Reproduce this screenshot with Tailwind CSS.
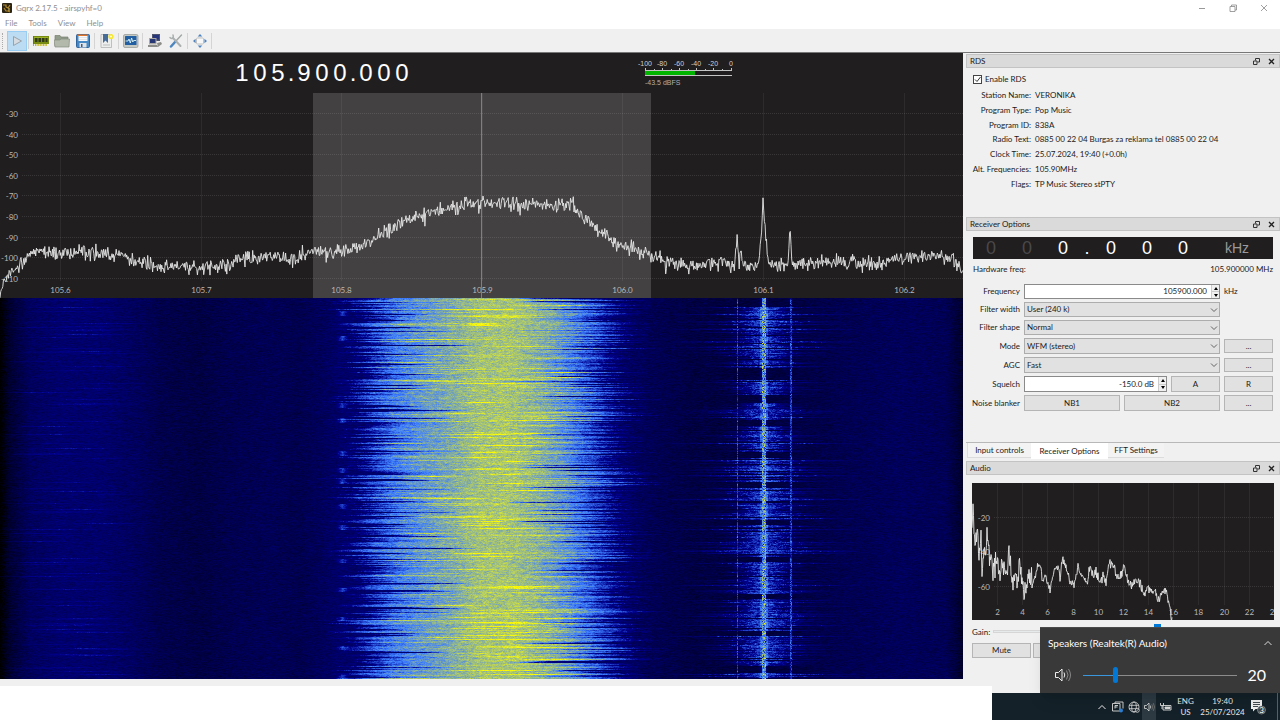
<!DOCTYPE html>
<html lang="en">
<head>
    <meta charset="UTF-8">
    <meta name="viewport" content="width=device-width, initial-scale=1.0">
    <title>Gqrx 2.17.5 - airspyhf=0</title>
    <script src="https://cdn.jsdelivr.net/npm/@tailwindcss/browser@4"></script>
</head>
<body class="relative min-h-screen flex flex-col bg-[#f0f0f0] font-['Lato','Noto_Sans',sans-serif] text-[8px] leading-[14px] text-[#1a1a1a] overflow-x-hidden">

    <!-- title bar -->
    <header class="bg-white text-[#8f8f8f]">
        <div class="flex items-center h-4 pl-0.5 pr-3">
            <svg class="w-[10px] h-[10px] mr-1" viewBox="0 0 10 10"><rect width="10" height="10" rx="1" fill="#2c2412"/><path d="M1 2h3v2l2 1 2-3M2 5l2 3h2l2 1" stroke="#b08a2c" stroke-width="1.2" fill="none"/><path d="M7 5v3" stroke="#e8c860"/></svg>
            <h1 class="flex-1">Gqrx 2.17.5 - airspyhf=0</h1>
            <div class="flex gap-[23px]">
                <button aria-label="Minimize"><svg class="w-2 h-2" viewBox="0 0 8 8"><path d="M1 4.500h6" stroke="#999"/></svg></button>
                <button aria-label="Restore"><svg class="w-2 h-2" viewBox="0 0 8 8" fill="none" stroke="#888" stroke-width=".8"><path d="M1 2.500h5v5h-5zM2.500 2.500v-1.500h5v5h-1.500"/></svg></button>
                <button aria-label="Close"><svg class="w-2 h-2" viewBox="0 0 8 8"><path d="M1 1l6 6M7 1l-6 6" stroke="#888" stroke-width=".8"/></svg></button>
            </div>
        </div>
        <nav class="flex items-center h-[13px] pl-[5px] gap-[11px]">
            <a href="#">File</a>
            <a href="#">Tools</a>
            <a href="#">View</a>
            <a href="#">Help</a>
        </nav>
    </header>

    <!-- toolbar -->
    <div class="flex items-center gap-px h-6 bg-[#f0f0f0] border-b border-[#777] pl-0.5 *:shrink-0">
        <div class="w-1 h-4 border-l border-dotted border-[#aaa]"></div>
        <button aria-label="Start DSP" class="w-5 h-5 bg-[#bcdcf4] border border-[#99cdf3] flex items-center justify-center">
            <svg class="w-3.5 h-3.5" viewBox="0 0 14 14"><path d="M3.500 2.500l8 4.500-8 4.500z" fill="#d5dbe0" stroke="#99a3ab"/></svg>
        </button>
        <div class="w-0.5 h-4 border-l border-[#d4d4d4]"></div>
        <button aria-label="Configure I/O devices" class="w-5 h-5 flex items-center justify-center">
            <svg class="w-4 h-3.5" viewBox="0 0 16 14"><path d="M0 2h16v8H0z" fill="#788c12"/><path d="M1 3h14v1H1z" fill="#a0b428"/><path d="M2 4h2.500v4H2zM5.500 4H8v4H5.500zM9 4h2.500v4H9zM12.500 4h2v4h-2z" fill="#303a18"/><path d="M2 11h12" stroke="#c8b820" stroke-width="2" stroke-dasharray="1 .6"/><path d="M0 2v10" stroke="#555" stroke-width="1"/></svg>
        </button>
        <button aria-label="Open settings" class="w-5 h-5 flex items-center justify-center">
            <svg class="w-4 h-3.5" viewBox="0 0 16 14"><path d="M1 1.500h5l1 1.500h7v9H1z" fill="#929c8a" stroke="#777f70" stroke-width=".7"/><path d="M0 6h6l1-1h8.500L15 13H1z" fill="#b3baab" stroke="#858c7e" stroke-width=".7"/></svg>
        </button>
        <button aria-label="Save settings" class="w-5 h-5 flex items-center justify-center">
            <svg class="w-3.5 h-3.5" viewBox="0 0 14 14"><rect x=".5" y=".5" width="13" height="13" rx="1" fill="#4588c4" stroke="#2f659c"/><path d="M2.500 1h9v6h-9z" fill="#f6f8f9"/><path d="M2 .5h10v1.500H2z" fill="#e0752c"/><path d="M3 3.500h8M3 5.500h8" stroke="#ccc" stroke-width=".5"/><path d="M3.500 9h7v4.500h-7z" fill="#dde2e6"/><path d="M5 10h1.500v3H5z" fill="#345f8a"/></svg>
        </button>
        <div class="w-0.5 h-4 border-l border-[#d4d4d4]"></div>
        <button aria-label="Bookmarks" class="w-5 h-5 flex items-center justify-center">
            <svg class="w-3.5 h-4" viewBox="0 0 14 16"><path d="M1 1.500h10.500v13H1z" fill="#eceeee" stroke="#aaa" stroke-width=".7"/><path d="M3 1h5v9l-2.500-2.500L3 10z" fill="#486c98"/><path d="M3 12h7" stroke="#bbb"/><circle cx="11" cy="3.500" r="2.600" fill="#f5e830"/><circle cx="11" cy="3.500" r="1" fill="#fffde0"/></svg>
        </button>
        <div class="w-0.5 h-4 border-l border-[#d4d4d4]"></div>
        <button aria-label="DX cluster" class="w-5 h-5 flex items-center justify-center">
            <svg class="w-4 h-3.5" viewBox="0 0 16 14"><rect x=".5" y=".5" width="14.500" height="13" rx="1.500" fill="#c4c9c4" stroke="#929792" stroke-width=".7"/><rect x="2" y="2" width="11.500" height="9" rx=".6" fill="#215ea2"/><path d="M2.500 7H5l1-2 1.300 4L8.600 4l1.200 4 .8-1.500h2.400" stroke="#dff6f6" stroke-width=".9" fill="none"/></svg>
        </button>
        <div class="w-0.5 h-4 border-l border-[#d4d4d4]"></div>
        <button aria-label="Remote control" class="w-5 h-5 flex items-center justify-center">
            <svg class="w-3.5 h-3.5" viewBox="0 0 14 14"><path d="M4 0h8v7H4z" fill="#4e5570"/><path d="M5 1h6v4.500H5z" fill="#26347c"/><path d="M1 4h7.500v6.500H1z" fill="#aaa9a5"/><path d="M2 5h5.500v4H2z" fill="#283874"/><path d="M0 11h9l1 2H0zM9 9l4-1 1 2-4 3z" fill="#8c8c88"/></svg>
        </button>
        <button aria-label="Remote control settings" class="w-5 h-5 flex items-center justify-center">
            <svg class="w-3.5 h-3.5" viewBox="0 0 14 14" fill="none" stroke-linecap="round"><path d="M12.500 1L7 7" stroke="#a2a6a6" stroke-width="1.400"/><path d="M6.500 7.500L2 12.500" stroke="#4d86bf" stroke-width="2.500"/><path d="M4 4l7.500 8" stroke="#abb0b0" stroke-width="2"/><path d="M1 3.500c2 2 4 .5 3-2.500" stroke="#abb0b0" stroke-width="1.500"/></svg>
        </button>
        <div class="w-0.5 h-4 border-l border-[#d4d4d4]"></div>
        <button aria-label="Full screen" class="w-5 h-5 flex items-center justify-center">
            <svg class="w-3.5 h-3.5" viewBox="0 0 14 14"><rect x="3.500" y="4" width="7" height="6" rx="1" fill="#f8f8f8" stroke="#aaa" stroke-width=".7"/><path d="M7 0l2.300 2.600H4.700zM7 14l2.300-2.600H4.700zM0 7l2.600-2.300v4.600zM14 7l-2.600-2.300v4.600z" fill="#4f83bd"/></svg>
        </button>
        <div class="w-0.5 h-4 border-l border-[#d4d4d4]"></div>
    </div>

    <main class="flex flex-1">
        <!-- spectrum and waterfall -->
        <section class="flex-1 min-w-0 flex flex-col pb-[7px]">
            <div class="h-10 bg-[#201e1f] flex justify-between pl-[233px] pr-[231px] font-['Liberation_Sans',Arial,sans-serif]">
                <div class="flex items-center text-white text-2xl *:text-center">
                    <span class="w-[18px]">1</span><span class="w-[18px]">0</span><span class="w-[18px]">5</span><span class="w-2">.</span><span class="w-[18px]">9</span><span class="w-[18px]">0</span><span class="w-[18px]">0</span><span class="w-2">.</span><span class="w-[18px]">0</span><span class="w-[18px]">0</span><span class="w-[18px]">0</span>
                </div>
                <svg class="w-[87px] h-10 overflow-visible" fill="#d0d0d0" font-size="7">
                    <g text-anchor="middle">
                        <text x="0" y="13">-100</text><text x="17" y="13">-80</text><text x="34" y="13">-60</text><text x="51" y="13">-40</text><text x="68" y="13">-20</text><text x="86" y="13">0</text>
                    </g>
                    <path d="M0 17.500h87M.5 15v3M17.500 15v3M34.500 15v3M51.500 15v3M68.500 15v3M86.500 15v3M9.500 16v1M26.500 16v1M43.500 16v1M60.500 16v1M77.500 16v1M0 22.500h87" stroke="#c4c4c4"/>
                    <rect x="0" y="18" width="50" height="4" fill="#00b400"/>
                    <text x="0" y="32" fill="#b0b0b0">-43.5 dBFS</text>
                </svg>
            </div>
            <div class="relative h-[205px] bg-[#201e1f]">
                <svg id="spectrum" class="block w-full h-full"></svg>
            </div>
            <div class="relative flex-1 min-h-[381px] bg-[#000050]">
                <canvas id="waterfall" class="absolute inset-0 w-full h-full"></canvas>
            </div>
        </section>

        <aside class="w-[317px] shrink-0 pl-[3px] pt-px">
            <!-- RDS -->
            <div class="flex items-center h-3.5 pl-[3px] pr-1 bg-[#dadada] border border-[#c3c3c3]">
                <h2 class="flex-1">RDS</h2>
                <button aria-label="Float" class="mr-2"><svg class="w-[7px] h-[7px]" viewBox="0 0 7 7" fill="none" stroke="#333"><path d="M.5 3h3.500v3.500h-3.500zM2.500 2.500v-2h4v3.500h-2"/></svg></button>
                <button aria-label="Close"><svg class="w-[7px] h-[7px]" viewBox="0 0 7 7"><path d="M1 1l5 5M6 1l-5 5" stroke="#222" stroke-width="1.300"/></svg></button>
            </div>
            <div class="pt-1 pl-[7px] h-[149px]">
                <label class="flex items-center gap-[3px] h-3.5">
                    <span class="relative flex">
                        <input type="checkbox" checked class="peer appearance-none w-[9px] h-[9px] bg-white border border-[#444]">
                        <svg class="absolute inset-0 w-[9px] h-[9px] hidden peer-checked:block pointer-events-none" viewBox="0 0 9 9"><path d="M2 4.500l2 2 3.500-4.500" stroke="#333" fill="none"/></svg>
                    </span>
                    Enable RDS
                </label>
                <dl class="grid grid-cols-[58px_1fr] grid-rows-7 gap-x-1 h-[103px] mt-[2px] items-center *:whitespace-nowrap">
                    <dt class="justify-self-end">Station Name:</dt><dd>VERONIKA</dd>
                    <dt class="justify-self-end">Program Type:</dt><dd>Pop Music</dd>
                    <dt class="justify-self-end">Program ID:</dt><dd>838A</dd>
                    <dt class="justify-self-end">Radio Text:</dt><dd>0885 00 22 04 Burgas za reklama tel 0885 00 22 04</dd>
                    <dt class="justify-self-end">Clock Time:</dt><dd>25.07.2024, 19:40 (+0.0h)</dd>
                    <dt class="justify-self-end">Alt. Frequencies:</dt><dd>105.90MHz</dd>
                    <dt class="justify-self-end">Flags:</dt><dd>TP Music Stereo stPTY</dd>
                </dl>
            </div>

            <!-- receiver options -->
            <div class="flex items-center h-3.5 pl-[3px] pr-1 bg-[#dadada] border border-[#c3c3c3]">
                <h2 class="flex-1">Receiver Options</h2>
                <button aria-label="Float" class="mr-2"><svg class="w-[7px] h-[7px]" viewBox="0 0 7 7" fill="none" stroke="#333"><path d="M.5 3h3.500v3.500h-3.500zM2.500 2.500v-2h4v3.500h-2"/></svg></button>
                <button aria-label="Close"><svg class="w-[7px] h-[7px]" viewBox="0 0 7 7"><path d="M1 1l5 5M6 1l-5 5" stroke="#222" stroke-width="1.300"/></svg></button>
            </div>
            <div class="pt-1.5 pl-[7px] pr-[7px] h-[211px]">
                <div class="flex items-center h-[22px] bg-[#201e1f] text-white text-lg font-['Liberation_Sans',Arial,sans-serif] *:text-center">
                    <span class="w-9 text-[#4a4849]">0</span><span class="w-9 text-[#4a4849]">0</span><span class="w-9">0</span><span class="w-3">.</span><span class="w-9">0</span><span class="w-9">0</span><span class="w-9">0</span><span class="flex-1 text-sm text-[#9a9a9a]">kHz</span>
                </div>
                <div class="flex justify-between mt-[3px] mb-2">
                    <span>Hardware freq:</span><span>105.900000 MHz</span>
                </div>
                <div class="grid grid-cols-[47px_1fr_49px] grid-rows-[15px_15px_15px_16px_16px_16px_16px] gap-x-1 gap-y-[3px] items-stretch leading-[13px]">
                    <label for="freq" class="text-right leading-[15px]">Frequency</label>
                    <div class="flex bg-white border border-[#8a8a8a]">
                        <input id="freq" type="text" value="105900.000" class="flex-1 min-w-0 text-right pr-1 outline-none">
                        <div class="flex flex-col w-2 bg-[#f0f0f0] border-l border-[#ccc]">
                            <button aria-label="Frequency up" class="flex-1 flex items-center justify-center"><svg class="w-1 h-[3px]" viewBox="0 0 4 3"><path d="M0 3l2-3 2 3z"/></svg></button>
                            <button aria-label="Frequency down" class="flex-1 flex items-center justify-center border-t border-[#ccc]"><svg class="w-1 h-[3px]" viewBox="0 0 4 3"><path d="M0 0l2 3 2-3z"/></svg></button>
                        </div>
                    </div>
                    <span class="leading-[15px]">kHz</span>

                    <label for="fwidth" class="text-right leading-[15px]">Filter width</label>
                    <div class="relative flex">
                        <select id="fwidth" class="appearance-none flex-1 bg-[#e1e1e1] border border-[#adadad] pl-0.5"><option>User (240 k)</option></select>
                        <svg class="absolute right-0.5 top-1 w-2 h-2 pointer-events-none" viewBox="0 0 8 8"><path d="M1 2.500L4 5.500l3-3" stroke="#555" stroke-width=".9" fill="none"/></svg>
                    </div>
                    <span></span>

                    <label for="fshape" class="text-right leading-[15px]">Filter shape</label>
                    <div class="relative flex">
                        <select id="fshape" class="appearance-none flex-1 bg-[#e1e1e1] border border-[#adadad] pl-0.5"><option>Normal</option></select>
                        <svg class="absolute right-0.5 top-1 w-2 h-2 pointer-events-none" viewBox="0 0 8 8"><path d="M1 2.500L4 5.500l3-3" stroke="#555" stroke-width=".9" fill="none"/></svg>
                    </div>
                    <span></span>

                    <label for="mode" class="text-right leading-4">Mode</label>
                    <div class="relative flex">
                        <select id="mode" class="appearance-none flex-1 bg-[#e1e1e1] border border-[#adadad] pl-0.5"><option>WFM (stereo)</option></select>
                        <svg class="absolute right-0.5 top-1 w-2 h-2 pointer-events-none" viewBox="0 0 8 8"><path d="M1 2.500L4 5.500l3-3" stroke="#555" stroke-width=".9" fill="none"/></svg>
                    </div>
                    <button class="h-3.5 self-center leading-3 bg-[#e1e1e1] border border-[#b5b5b5]">...</button>

                    <label for="agc" class="text-right leading-4">AGC</label>
                    <div class="relative flex">
                        <select id="agc" class="appearance-none flex-1 bg-[#e1e1e1] border border-[#adadad] pl-0.5"><option>Fast</option></select>
                        <svg class="absolute right-0.5 top-1 w-2 h-2 pointer-events-none" viewBox="0 0 8 8"><path d="M1 2.500L4 5.500l3-3" stroke="#555" stroke-width=".9" fill="none"/></svg>
                    </div>
                    <button class="h-3.5 self-center leading-3 bg-[#e1e1e1] border border-[#b5b5b5]">...</button>

                    <label for="squelch" class="text-right leading-4">Squelch</label>
                    <div class="flex gap-1">
                        <div class="flex flex-1 min-w-0 bg-white border border-[#8a8a8a]">
                            <input id="squelch" type="text" value="-150.0 dB" class="flex-1 min-w-0 text-right pr-1 outline-none">
                            <div class="flex flex-col w-2 bg-[#f0f0f0] border-l border-[#ccc]">
                                <button aria-label="Squelch up" class="flex-1 flex items-center justify-center"><svg class="w-1 h-[3px]" viewBox="0 0 4 3"><path d="M0 3l2-3 2 3z"/></svg></button>
                                <button aria-label="Squelch down" class="flex-1 flex items-center justify-center border-t border-[#ccc]"><svg class="w-1 h-[3px]" viewBox="0 0 4 3"><path d="M0 0l2 3 2-3z"/></svg></button>
                            </div>
                        </div>
                        <button class="w-[49px] bg-[#e1e1e1] border border-[#b5b5b5]">A</button>
                    </div>
                    <button class="bg-[#e1e1e1] border border-[#b5b5b5]">R</button>

                    <span class="justify-self-end whitespace-nowrap leading-4">Noise blanker</span>
                    <div class="flex gap-1">
                        <button class="flex-1 bg-[#e1e1e1] border border-[#b5b5b5]">NB1</button>
                        <button class="flex-1 bg-[#e1e1e1] border border-[#b5b5b5]">NB2</button>
                    </div>
                    <button class="bg-[#e1e1e1] border border-[#b5b5b5]">...</button>
                </div>
            </div>

            <div class="flex items-start h-[19px] border-t border-[#b8b8b8] pl-px *:whitespace-nowrap">
                <button class="w-16 h-[15px] bg-[#f3f3f3] border-l border-b border-[#dcdcdc]">Input controls</button>
                <button class="w-[77px] h-4 bg-white">Receiver Options</button>
                <button class="w-14 h-[15px] bg-[#f3f3f3] border-b border-[#dcdcdc]">FFT Settings</button>
            </div>

            <!-- audio -->
            <div class="flex items-center h-3.5 pl-[3px] pr-1 bg-[#dadada] border border-[#c3c3c3]">
                <h2 class="flex-1">Audio</h2>
                <button aria-label="Float" class="mr-2"><svg class="w-[7px] h-[7px]" viewBox="0 0 7 7" fill="none" stroke="#333"><path d="M.5 3h3.500v3.500h-3.500zM2.500 2.500v-2h4v3.500h-2"/></svg></button>
                <button aria-label="Close"><svg class="w-[7px] h-[7px]" viewBox="0 0 7 7"><path d="M1 1l5 5M6 1l-5 5" stroke="#222" stroke-width="1.300"/></svg></button>
            </div>
            <div class="pt-2 pl-1.5 pr-1.5">
                <svg id="audio" class="block w-full h-[137px] bg-[#201e1f]"></svg>
                <div class="flex items-center mt-1 h-[15px]">
                    <label for="gain" class="w-[21px]">Gain:</label>
                    <input id="gain" type="range" min="0" max="100" value="59" class="appearance-none flex-1 min-w-0 h-[3px] bg-[#e7eaea] border border-[#d6d6d6] [&::-webkit-slider-thumb]:appearance-none [&::-webkit-slider-thumb]:w-[7px] [&::-webkit-slider-thumb]:h-[15px] [&::-webkit-slider-thumb]:bg-[#0078d7]">
                </div>
                <div class="flex gap-0.5 mt-1">
                    <button class="w-[59px] h-[15px] leading-[13px] bg-[#e1e1e1] border border-[#b5b5b5]">Mute</button>
                    <button class="w-[59px] h-[15px] leading-[13px] bg-[#e1e1e1] border border-[#b5b5b5]" aria-label="UDP"></button>
                </div>
            </div>
        </aside>
    </main>

    <!-- desktop strip and taskbar -->
    <footer class="flex items-end bg-[#f0f0f0]">
        <div class="flex-1 h-[34px] bg-white"></div>
        <div class="w-72 h-[27px] bg-[#142128] text-[#e8e8e8] flex items-center justify-end">
            <button aria-label="Show hidden icons" class="w-4 flex justify-center"><svg class="w-2 h-2" viewBox="0 0 8 8"><path d="M.5 6L4 2.500 7.500 6" stroke="#eee" fill="none"/></svg></button>
            <button aria-label="Tray app" class="w-4 flex justify-center"><svg class="w-3 h-3" viewBox="0 0 12 12" fill="none" stroke="#ddd" stroke-width=".9"><path d="M.5 2.500h7.500v7.500h-7.500zM3 2V1h8v6.500"/><path d="M3 7.500v-3h3M3 6h2.500"/><circle cx="9" cy="9.500" r="2" fill="#2d7dd2" stroke="none"/></svg></button>
            <button aria-label="Network" class="w-4 flex justify-center"><svg class="w-3 h-3" viewBox="0 0 12 12" fill="none" stroke="#ddd" stroke-width=".8"><circle cx="6" cy="6" r="5"/><ellipse cx="6" cy="6" rx="2.300" ry="5"/><path d="M1 4.300h10M1 7.700h10"/><circle cx="9.300" cy="9.300" r="2" fill="#142128"/><path d="M8 10.600l2.600-2.600"/></svg></button>
            <button aria-label="Volume" class="w-3.5 h-full bg-[#2d3a42] flex items-center justify-center"><svg class="w-[11px] h-2.5" viewBox="0 0 11 10" fill="none" stroke="#ddd" stroke-width=".8"><path d="M.5 3.500h2L5 1v8L2.500 6.500h-2z"/><path d="M6.300 3.500q1 1.500 0 3"/><path d="M7.800 2.300q2 2.700 0 5.400M9.300 1.200q2.500 3.800 0 7.600" stroke="#777"/></svg></button>
            <button aria-label="Battery" class="w-[19px] flex justify-center"><svg class="w-3 h-2.5" viewBox="0 0 12 10" fill="none" stroke="#ddd" stroke-width=".9"><path d="M3 3.500h8v4.500H3z"/><path d="M5 5h5v1.500H5z" fill="#ddd"/><path d="M.5 1v2.500h3V1M2 3.500V7" /></svg></button>
            <button class="w-[21px] leading-[11px] text-center">ENG<br>US</button>
            <button class="w-[49px] ml-[2px] leading-[11px] text-center">19:40<br>25/07/2024</button>
            <button aria-label="Notifications" class="relative w-[26px] ml-1 flex justify-start">
                <svg class="w-[15px] h-4" viewBox="0 0 15 16"><path d="M0 1h11v9H4.500L2 12.500V10H0z" fill="#f0f0f0"/><path d="M2 3.500h7M2 5.500h7M2 7.500h5" stroke="#142128" stroke-width=".8"/><circle cx="10.500" cy="11" r="4" fill="#3c474e" stroke="#aaa" stroke-width=".6"/><text x="10.500" y="14" font-size="8" fill="#fff" text-anchor="middle">3</text></svg>
            </button>
            <div class="w-[3px] h-full border-l border-[#55606a]"></div>
        </div>
    </footer>

    <!-- volume flyout -->
    <div class="absolute right-0 bottom-[27px] w-60 h-[66px] bg-[#393939] text-white shadow-lg flex flex-col px-2 border-t border-[#4a4a4a]">
        <div class="flex items-center justify-between h-[30px]">
            <span class="text-[10px]">Speakers (Realtek(R) Audio)</span>
            <button aria-label="Choose device"><svg class="w-2 h-2" viewBox="0 0 8 8"><path d="M.5 6L4 2.500 7.500 6" stroke="#ddd" fill="none"/></svg></button>
        </div>
        <div class="flex items-center h-9 pl-[7px] pr-1.5">
            <button aria-label="Mute speakers"><svg class="w-[17px] h-4" viewBox="0 0 17 16" fill="none" stroke="#eee"><path d="M.5 5.500h3L7 2v12L3.500 10.500h-3z"/><path d="M9 5.500q1.500 2.500 0 5"/><path d="M11.500 3.500q3 4.500 0 9M13.500 2q4 6 0 12" stroke="#888"/></svg></button>
            <input type="range" aria-label="Volume" min="0" max="100" value="20" class="appearance-none flex-1 min-w-0 ml-[11px] h-px bg-[linear-gradient(to_right,#3a96dd_20%,#8c8c8c_20%)] [&::-webkit-slider-thumb]:appearance-none [&::-webkit-slider-thumb]:w-[5px] [&::-webkit-slider-thumb]:h-4 [&::-webkit-slider-thumb]:rounded-sm [&::-webkit-slider-thumb]:bg-[#0078d7]">
            <span class="ml-2.5 text-base">20</span>
        </div>
    </div>

    <script>
        // small seeded generator so every redraw shows the same signal
        let seed = 1059;
        function rnd() {
            seed = (seed * 1664525 + 1013904223) >>> 0;
            return seed / 4294967296;
        }
        const noise = () => rnd() + rnd() + rnd() - 1.5;

        function lerp(points, x) {
            if (x <= points[0][0]) return points[0][1];
            for (let i = 1; i < points.length; i++) {
                if (x <= points[i][0]) {
                    const [x0, y0] = points[i - 1];
                    const [x1, y1] = points[i];
                    return y0 + (y1 - y0) * (x - x0) / (x1 - x0);
                }
            }
            return points[points.length - 1][1];
        }

        const SPAN = 963;
        const level = [[0,202],[3,190],[10,179],[18,173],[24,170],[30,161],[40,158],[60,159],[90,159],[100,158],[112,163],[122,160],[130,165],[145,171],[160,174],[180,174],[200,174],[215,173],[230,172],[240,165],[260,164],[280,163],[293,168],[302,161],[320,160],[345,158],[360,152],[375,147],[385,138],[400,129],[410,127],[425,120],[445,115],[465,112],[480,111],[500,109],[520,110],[545,111],[565,111],[573,109],[576,119],[585,125],[595,134],[605,141],[612,152],[625,153],[640,159],[651,161],[665,167],[680,172],[700,173],[710,168],[725,169],[733,175],[735,169],[737,139],[739,169],[741,157],[743,177],[745,173],[757,172],[760,161],[763,108],[764,118],[767,160],[770,171],[785,171],[788,169],[790,136],[792,169],[797,172],[820,169],[850,168],[875,171],[900,166],[925,163],[945,164],[957,169],[963,177]];
        const audioLevel = [[0,50],[1,22],[2,50],[4,62],[5,40],[7,72],[9,52],[10,88],[12,62],[14,75],[15,41],[17,70],[19,72],[21,88],[25,73],[28,98],[30,76],[33,95],[37,68],[41,105],[44,86],[46,104],[47,73],[50,100],[54,108],[56,90],[61,101],[67,78],[70,95],[74,94],[78,106],[82,88],[85,82],[88,92],[90,78],[94,82],[98,98],[102,102],[106,82],[108,90],[111,92],[115,102],[118,84],[122,95],[124,88],[128,100],[131,90],[134,98],[137,80],[141,82],[145,94],[148,92],[152,84],[156,98],[160,102],[165,98],[168,100],[171,110],[176,103],[180,112],[183,108],[187,118],[190,108],[195,112],[197,122],[200,137]];

        const spectrum = document.getElementById('spectrum');
        const audio = document.getElementById('audio');
        const canvas = document.getElementById('waterfall');

        function drawSpectrum() {
            seed = 1059;
            const W = spectrum.clientWidth;
            const sx = W / SPAN;
            let html = `<rect x="${313 * sx}" y="0" width="${338 * sx}" height="205" fill="#434142"/>`;
            for (let i = 0; i < 7; i++) {
                const x = Math.round((60 + i * 140.6) * sx) + 0.5;
                html += `<path d="M${x} 0V188" stroke="#fff" stroke-opacity=".06"/>
                    <text x="${x}" y="200" text-anchor="middle">${(105.6 + i / 10).toFixed(1)}</text>`;
            }
            for (let i = 0; i < 9; i++) {
                const y = Math.round(20 + i * 20.6) + 0.5;
                html += `<path d="M22 ${y}H${W}" stroke="#fff" stroke-opacity=".11" stroke-dasharray="1 1"/>
                    <text x="18" y="${y + 3}" text-anchor="end">${-30 - i * 10}</text>`;
            }
            html += `<path d="M${Math.round(481 * sx) + 0.5} 0V205" stroke="#b06a6a"/>`;
            let d = '';
            for (let x = 0; x < SPAN; x += 0.7) {
                let y = lerp(level, x) + noise() * 7;
                if (rnd() > 0.95) y += 4;
                d += (x ? 'L' : 'M') + (x * sx).toFixed(1) + ' ' + y.toFixed(1);
            }
            html += `<path d="${d}" fill="none" stroke="#e8e8e8" stroke-width=".9"/>`;
            spectrum.innerHTML = `<g font-size="8" fill="#b8b8b8">${html}</g>`;
        }

        function drawAudio() {
            seed = 77;
            const W = audio.clientWidth;
            const sx = W / 302;
            let html = '';
            for (let i = 1; i <= 12; i++) {
                const x = Math.round(i * 25.15 * sx) + 0.5;
                html += `<path d="M${x} 0V122" stroke="#fff" stroke-opacity=".06"/>
                    <text x="${x}" y="132" text-anchor="middle">${i * 2}</text>`;
            }
            [-20, -40, -60].forEach((db, i) => {
                const y = Math.round(34 + i * 34.4) + 0.5;
                html += `<path d="M22 ${y}H${W}" stroke="#fff" stroke-opacity=".11" stroke-dasharray="1 1"/>
                    <text x="18" y="${y + 3}" text-anchor="end">${db}</text>`;
            });
            let d = '';
            for (let x = 0; x <= 200; x += 0.5) {
                const jitter = x < 60 ? 12 : 5;
                d += (x ? 'L' : 'M') + (x * sx).toFixed(1) + ' ' + (lerp(audioLevel, x) + noise() * jitter).toFixed(1);
            }
            html += `<path d="${d}" fill="none" stroke="#e8e8e8" stroke-width=".9"/>`;
            audio.innerHTML = `<g font-size="8" fill="#b8b8b8">${html}</g>`;
        }

        function color(i) {
            if (i < 20) return [0, 0, 0];
            if (i < 70) return [0, 0, 140 * (i - 20) / 50];
            if (i < 100) return [60 * (i - 70) / 30, 125 * (i - 70) / 30, 115 * (i - 70) / 30 + 140];
            if (i < 150) return [195 * (i - 100) / 50 + 60, 130 * (i - 100) / 50 + 125, 255 - 255 * (i - 100) / 50];
            return [255, 255 - 255 * (i - 150) / 100, 0];
        }
        const floor = [[0,20],[10,38],[30,53],[60,58],[100,58],[140,52],[160,47],[200,44],[230,48],[270,50],[300,48],[320,52],[340,57],[600,57],[630,54],[650,50],[690,44],[740,42],[800,44],[850,49],[900,52],[945,50],[955,42],[963,34]];
        const band = [[325,40],[345,54],[360,68],[375,84],[388,96],[402,103],[420,109],[450,117],[480,126],[515,127],[545,119],[565,110],[580,99],[600,84],[612,72],[625,60],[640,50],[655,40]];
        const idle = [[0,9],[70,82],[97,105],[122,128],[154,160]];
        const blobs = [15,40,107,122,155,172,183,208,229];

        function drawWaterfall() {
            seed = 2024;
            canvas.width = canvas.clientWidth;
            canvas.height = canvas.clientHeight;
            const sx = canvas.width / SPAN;
            const ctx = canvas.getContext('2d');
            const img = ctx.createImageData(canvas.width, canvas.height);
            const floorAt = [];
            for (let px = 0; px < canvas.width; px++) floorAt.push(lerp(floor, px / sx));
            let slow = 0;
            for (let y = 0; y < canvas.height; y++) {
                slow = slow * 0.75 + noise() * 0.6;
                const left = slow * 10 + noise() * 22;
                const right = slow * 8 + noise() * 22;
                const dark = rnd() > 0.72 ? (rnd() > 0.5 ? -1 : 1) : 0;
                const reach = 40 + rnd() * 80;
                const depth = 12 + rnd() * 40;
                const streak = rnd() > 0.6;
                const streakAt = 390 + rnd() * 195;
                const streakW = 20 + rnd() * 40;
                const streakGain = 6 + rnd() * 18;
                const drift = rnd() > 0.8 ? 6 + rnd() * 10 : 0;
                const driftAt = 30 + rnd() * 80;
                const busy = !idle.some(([a, b]) => y >= a && y < b) && rnd() > 0.12 && (y < 170 || y % 37 > 4);
                const burst = busy ? 18 + rnd() * rnd() * 56 : 0;
                const burstGain = 32 + rnd() * 14;
                const blob = blobs.some(b => Math.abs(b - y) < 3) || (y > 240 && y % 29 < 4);
                let grain = 0;
                for (let px = 0; px < canvas.width; px++) {
                    const x = px / sx;
                    // neighbouring bins bleed into each other
                    grain = grain * 0.5 + noise();
                    let v = floorAt[px] + grain * 5;
                    if (x > 300 && x < 690) {
                        const shift = x < 482 ? -left : right;
                        const w = Math.min(1, Math.abs(x - 482) / 50);
                        let b = lerp(band, x + shift * w) + grain * 8;
                        if (dark < 0 && x < 482) b -= depth * Math.min(1, Math.max(0, (340 + reach - x) / 30 + 0.6));
                        if (dark > 0 && x > 482) b -= depth * Math.min(1, Math.max(0, (x - 630 + reach) / 30 + 0.6));
                        if (streak) b += streakGain * Math.exp(-Math.pow((x - streakAt) / streakW, 2));
                        if (y > 24 && y < 28) b += 22 * Math.exp(-Math.pow((x - 481) / 12, 2));
                        v = Math.max(v, b);
                    }
                    if (drift && x < 200) v += drift * Math.exp(-Math.pow((x - driftAt) / 35, 2));
                    if (blob && Math.abs(x - 342) < 7) v += 26 * (1 - Math.abs(x - 342) / 7);
                    if (x > 670 && x < 860) {
                        const off = Math.abs(x - 763.5);
                        if (burst) v += burstGain * Math.exp(-Math.pow(off / burst, 2)) + grain * (off < burst ? 7 : 0);
                        if (off < 1.6) v = 108 + noise() * 30;
                        else if (off < 4) v += 14;
                        if (Math.abs(x - 737) < 1 || Math.abs(x - 790.5) < 1) v = Math.max(v, 82 + noise() * 20);
                    }
                    const [r, g, bl] = color(v);
                    const o = (y * canvas.width + px) * 4;
                    img.data[o] = r;
                    img.data[o + 1] = g;
                    img.data[o + 2] = bl;
                    img.data[o + 3] = 255;
                }
            }
            ctx.putImageData(img, 0, 0);
        }

        new ResizeObserver(drawSpectrum).observe(spectrum.parentElement);
        new ResizeObserver(drawAudio).observe(audio);
        new ResizeObserver(drawWaterfall).observe(canvas.parentElement);
    </script>
</body>
</html>
